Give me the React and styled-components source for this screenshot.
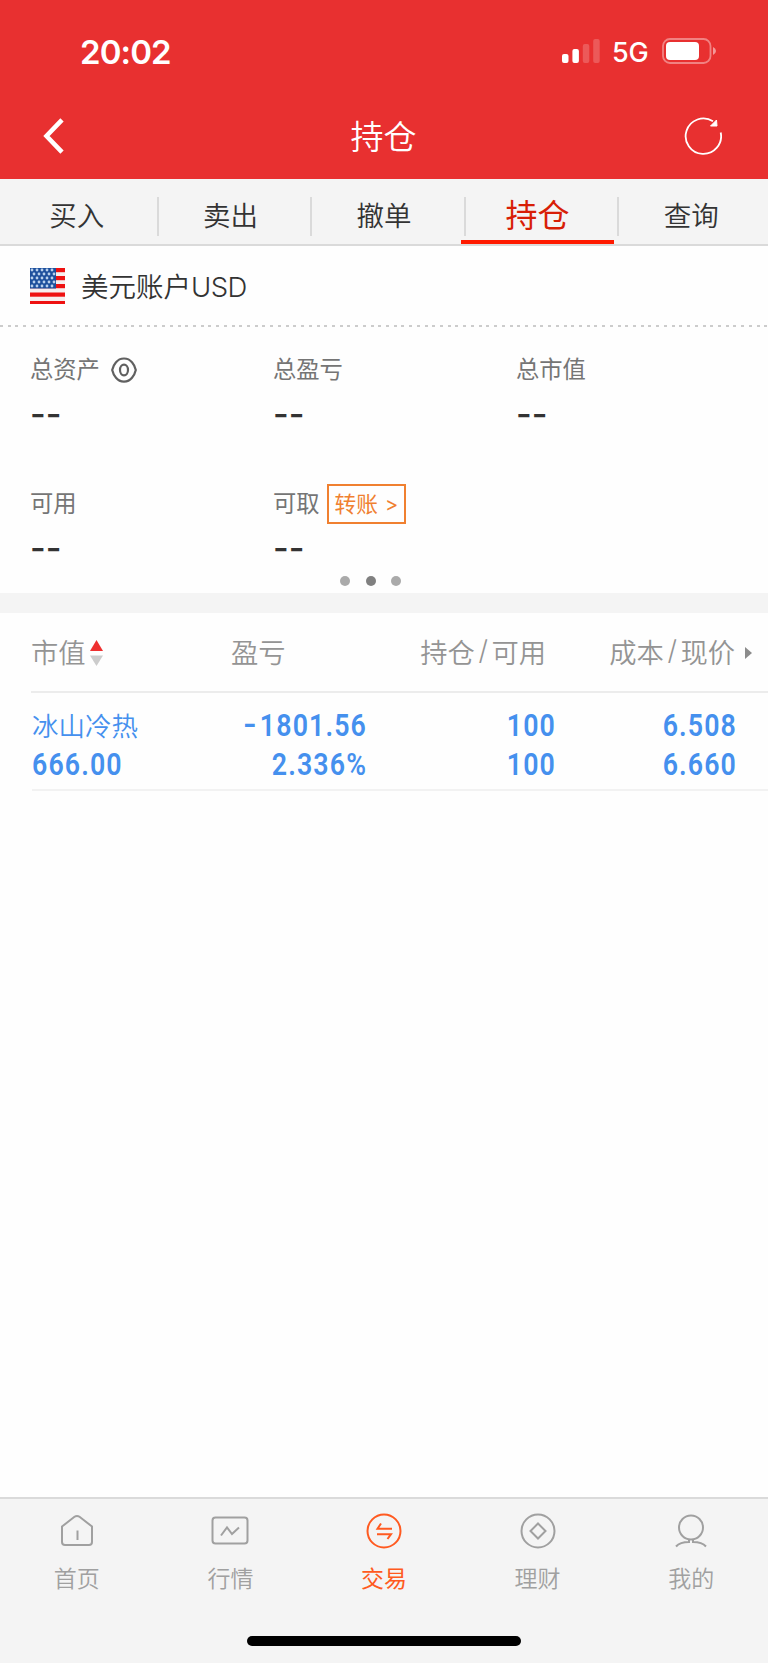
import React from 'react';
import styled, { createGlobalStyle } from 'styled-components';

const GlobalStyle = createGlobalStyle`
    * {
      box-sizing: border-box;
    }
    body {
      margin: 0;
      background: #ffffff;
      font-family: Inter, 'Noto Sans CJK SC', sans-serif;
    }
    svg {
      display: block;
      flex: none;
    }
`;

const StyledPage = styled.div`
    display: flex;
    flex-direction: column;
    width: 768px;
    height: 1663px;
    overflow: hidden;
    background: #fefefe;
`;

const StyledHeader = styled.header`
    height: 179px;
    flex: none;
    background: #e83030;
    color: #ffffff;
`;

const StyledStatusBar = styled.div`
    display: flex;
    align-items: center;
    justify-content: space-between;
    height: 102px;
    padding: 0 51px 0 80px;
`;

const StyledClock = styled.div`
    padding-top: 1px;
    font-size: 33px;
    font-weight: 600;
    line-height: 40px;
    letter-spacing: -0.9px;
`;

const StyledSignals = styled.div`
    display: flex;
    align-items: center;
`;

const StyledNetwork = styled.span`
    width: 40px;
    margin: 3px 10px 0 11px;
    font-size: 27px;
    font-weight: 500;
    line-height: 32px;
    letter-spacing: -0.2px;
`;

const StyledTitleBar = styled.div`
    display: grid;
    grid-template-columns: 1fr auto 1fr;
    align-items: center;
    height: 68px;
    padding: 0 46px 0 42px;
    svg:last-child {
      justify-self: end;
    }
`;

const StyledTitle = styled.h1`
    margin: 0;
    padding: 2px 0 0 3px;
    font-size: 33px;
    font-weight: 350;
    line-height: 48px;
`;

const StyledTabs = styled.nav`
    display: flex;
    flex: none;
    height: 67px;
    background: #f4f4f4;
    border-bottom: 2px solid #dadada;
`;

const StyledTab = styled.div`
    display: flex;
    flex: 1;
    align-items: center;
    justify-content: center;
    padding-top: ${({ $active }) => ($active ? '6px' : '8px')};
    font-size: ${({ $active }) => ($active ? '32px' : '27.5px')};
    font-weight: ${({ $active }) => ($active ? 400 : 350)};
    color: ${({ $active }) => ($active ? '#d81e06' : '#333333')};
    border-bottom: 4px solid ${({ $active }) => ($active ? '#ff1a00' : 'transparent')};
`;

const StyledTabCell = styled.div`
    display: flex;
    flex: 1;
    position: relative;
    & + &::before {
      content: '';
      position: absolute;
      left: 3px;
      top: 18px;
      width: 2px;
      height: 39px;
      background: #dadada;
    }
`;

const StyledAccount = styled.section`
    display: flex;
    flex: none;
    align-items: center;
    gap: 16px;
    height: 79px;
    padding-left: 30px;
    font-size: 27.5px;
    font-weight: 350;
    color: #333333;
    div {
      margin-top: -1px;
    }
`;

const StyledLatin = styled.span`
    font-weight: 300;
    letter-spacing: -0.6px;
`;

const StyledDots = styled.div`
    height: 2px;
    flex: none;
    background: repeating-linear-gradient(90deg, #cccccc 0 3px, transparent 3px 7.72px);
`;

const StyledSummary = styled.section`
    display: grid;
    flex: none;
    grid-template-columns: 243px 243px 1fr;
    grid-template-rows: 134px 98px;
    height: 244px;
    padding: 21px 0 0 30px;
`;

const StyledLabel = styled.div`
    display: flex;
    align-items: center;
    height: 44px;
    font-size: 23.3px;
    line-height: 40px;
    color: #757575;
    svg {
      margin-left: 11px;
    }
`;

const StyledDashes = styled.div`
    margin-top: 2px;
    font-size: 34px;
    font-weight: 500;
    line-height: 40px;
    color: #333333;
`;

const StyledTransfer = styled.button`
    display: flex;
    align-items: center;
    gap: 7px;
    width: 79px;
    height: 40px;
    margin-left: 7px;
    padding: 0 0 3px 6px;
    border: 2px solid #f08030;
    background: none;
    font-family: inherit;
    font-size: 21.7px;
    font-weight: 400;
    color: #f08030;
    span {
      font-size: 20px;
      padding-top: 3px;
    }
`;

const StyledPager = styled.div`
    display: flex;
    flex: none;
    gap: 15.5px;
    height: 22px;
    padding: 5px 0 0 340px;
`;

const StyledPagerDot = styled.span`
    width: 10px;
    height: 10px;
    border-radius: 50%;
    background: ${({ $active }) => ($active ? '#808080' : '#aaaaaa')};
`;

const StyledGap = styled.div`
    flex: none;
    height: 20px;
    background: #f4f4f4;
`;

const StyledTableHead = styled.div`
    display: flex;
    flex: none;
    align-items: center;
    height: 80px;
    margin-left: 31px;
    padding-bottom: 3px;
    border-bottom: 2px solid #ececec;
    font-size: 27.3px;
    font-weight: 350;
    color: #949494;
`;

const StyledHeadCell = styled.div`
    display: flex;
    align-items: center;
    justify-content: ${({ $end }) => ($end ? 'flex-end' : 'flex-start')};
    gap: ${({ $gap }) => $gap || 0}px;
    width: ${({ $width }) => $width}px;
    svg {
      margin-top: 4px;
    }
`;

const StyledSlash = styled.span`
    margin: 0 3.5px;
    font-weight: 300;
`;

const StyledMore = styled.span`
    margin-left: 10px;
`;

const StyledRow = styled.div`
    display: grid;
    flex: none;
    grid-template-columns: 160px 175px 189px 181px;
    grid-template-rows: 39px 39px;
    height: 98px;
    margin-left: 32px;
    padding-top: 13px;
    border-bottom: 2px solid #f2f2f2;
    color: #4590ee;
`;

const StyledStock = styled.div`
    font-size: 26.5px;
    font-weight: 350;
    line-height: 41px;
`;

const StyledFigure = styled.div`
    font-family: Roboto, sans-serif;
    font-size: 31.5px;
    font-weight: 600;
    line-height: 39px;
    letter-spacing: 1.3px;
    white-space: nowrap;
    text-align: ${({ $left }) => ($left ? 'left' : 'right')};
    transform: scaleX(0.85);
    transform-origin: ${({ $left }) => ($left ? 'left' : 'right')};
`;

const StyledMinus = styled.span`
    display: inline-block;
    margin-right: 2px;
    transform: translateY(-1px) scaleX(1.35);
    transform-origin: right;
`;

const StyledFooter = styled.footer`
    flex: none;
    height: 166px;
    margin-top: auto;
    background: #f4f4f4;
    border-top: 2px solid #dadada;
`;

const StyledFooterTabs = styled.div`
    display: flex;
    height: 137px;
`;

const StyledFooterTab = styled.div`
    display: flex;
    flex: 1;
    flex-direction: column;
    align-items: center;
    gap: 12px;
    padding-top: 13px;
    font-size: 23px;
    font-weight: ${({ $active }) => ($active ? 400 : 350)};
    line-height: 34px;
    color: ${({ $active }) => ($active ? '#ff5a20' : '#a0a0a0')};
`;

const StyledHomeBar = styled.div`
    width: 274px;
    height: 10px;
    margin: 0 auto;
    border-radius: 5px;
    background: #000000;
`;

const SignalIcon = () => (
    <svg width="39" height="26" viewBox="0 0 39 26" fill="#ffffff">
        <rect x="0" y="16" width="6.500" height="9" rx="2" />
        <rect x="10.400" y="11" width="6.500" height="14" rx="2" />
        <rect x="20.800" y="6" width="6.500" height="19" rx="2" opacity="0.2" />
        <rect x="31.200" y="1" width="6.500" height="24" rx="2" opacity="0.2" />
    </svg>
);

const BatteryIcon = () => (
    <svg width="55" height="26" viewBox="0 0 55 26">
        <rect x="1" y="1" width="47.5" height="24" rx="7" fill="none" stroke="#ffffff" strokeWidth="1.8" opacity="0.4" />
        <rect x="4" y="4" width="33" height="18" rx="4" fill="#ffffff" />
        <path d="M51 9 Q54 10.500 54 13 T51 17 Z" fill="#ffffff" opacity="0.5" />
    </svg>
);

const BackIcon = () => (
    <svg width="24" height="36" viewBox="0 0 24 36" fill="none" stroke="#ffffff" strokeWidth="4.6">
        <path d="M20 1.800 L4.500 18 L20 34.200" />
    </svg>
);

const RefreshIcon = () => (
    <svg width="38" height="38" viewBox="0 0 38 38">
        <path d="M29 4.300 A17.700 17.700 0 1 0 36.700 15.500" fill="none" stroke="#ffffff" strokeWidth="1.8" />
        <path d="M32.500 3 L33 9 H26.500 Z" fill="#ffffff" stroke="#ffffff" />
    </svg>
);

const FlagIcon = () => (
    <svg width="35" height="36" viewBox="0 0 35 36">
        <rect width="35" height="36" fill="#f7eeee" />
        {[0, 8, 16, 24.5, 33].map((y) => (
            <rect key={y} y={y} width="35" height={y > 30 ? 3 : 4.2} fill="#ee1111" />
        ))}
        <rect width="26" height="20.500" fill="#1d4f9c" />
        {[2, 6, 10, 14, 18].map((y, i) => [2.500, 7.500, 12.500, 17.500, 22.500].map((x) => (
            <circle key={`${x}-${y}`} cx={x + (i % 2 ? 1.500 : -0.500)} cy={y} r="1.400" fill="#b9d0ec" />
        )))}
    </svg>
);

const EyeIcon = () => (
    <svg width="26" height="26" viewBox="0 0 26 26" fill="none" stroke="#606060" strokeWidth="2.2">
        <path d="M1.200 13 Q2.200 8.500 5 5.300 C9 0.200 17 0.200 21 5.300 Q23.800 8.500 24.800 13 Q23.800 17.500 21 20.700 C17 25.800 9 25.800 5 20.700 Q2.200 17.500 1.200 13 Z" />
        <ellipse cx="13" cy="13" rx="4" ry="5.300" />
    </svg>
);

const SortIcon = () => (
    <svg width="13" height="26" viewBox="0 0 13 26">
        <path d="M6.500 0 L13 11 H0 Z" fill="#ee3030" />
        <path d="M0 15.500 H13 L6.500 26 Z" fill="#cccccc" />
    </svg>
);

const MoreIcon = () => (
    <svg width="7" height="12" viewBox="0 0 7 12">
        <path d="M0 0 L7 6 L0 12 Z" fill="#8c8c8c" />
    </svg>
);

const ICON_PATHS = {
    home: (
        <>
            <path d="M4 14.500 L16.500 4.800 Q19 3 21.500 4.800 L34 14.500 V30 Q34 33 31 33 H7 Q4 33 4 30 Z" />
            <path d="M19.500 18.500 V28" />
        </>
    ),
    market: (
        <>
            <rect x="1.500" y="5.500" width="35" height="26" rx="3" />
            <path d="M10 23.500 L16 15.500 L21 22 L28 15.500" />
        </>
    ),
    trade: (
        <>
            <circle cx="19" cy="19" r="16.500" />
            <path d="M16 11.500 L12.500 16.800 H27 M12 22.200 H26 L22.500 27" />
        </>
    ),
    wealth: (
        <>
            <circle cx="19" cy="19" r="16.500" />
            <path d="M19 11.500 L26.500 19 L19 26.500 L11.500 19 Z" />
        </>
    ),
    mine: (
        <>
            <circle cx="19" cy="15.500" r="12" />
            <path d="M4 34.500 Q8 30 17 30 V27.500 M21 27.500 V30 Q30 30 34 34.500" />
        </>
    ),
};

const FooterIcon = ({ name }) => (
    <svg width="38" height="38" viewBox="0 0 38 38" fill="none" stroke="currentColor" strokeWidth="2">
        {ICON_PATHS[name]}
    </svg>
);

const tabs = ['买入', '卖出', '撤单', '持仓', '查询'];

const summary = [
    { label: '总资产', icon: <EyeIcon /> },
    { label: '总盈亏' },
    { label: '总市值' },
    { label: '可用' },
    { label: '可取', icon: <StyledTransfer>转账<span>&gt;</span></StyledTransfer> },
];

const figures = [
    <><StyledMinus>-</StyledMinus>1801.56</>,
    '100',
    '6.508',
    '666.00',
    '2.336%',
    '100',
    '6.660',
];

const footerTabs = [
    { name: 'home', label: '首页' },
    { name: 'market', label: '行情' },
    { name: 'trade', label: '交易' },
    { name: 'wealth', label: '理财' },
    { name: 'mine', label: '我的' },
];

const App = () => (
    <>
        <GlobalStyle />
        <StyledPage>
            <StyledHeader>
                <StyledStatusBar>
                    <StyledClock>20:02</StyledClock>
                    <StyledSignals>
                        <SignalIcon />
                        <StyledNetwork>5G</StyledNetwork>
                        <BatteryIcon />
                    </StyledSignals>
                </StyledStatusBar>
                <StyledTitleBar>
                    <BackIcon />
                    <StyledTitle>持仓</StyledTitle>
                    <RefreshIcon />
                </StyledTitleBar>
            </StyledHeader>
            <StyledTabs>
                {tabs.map((label) => (
                    <StyledTabCell key={label}>
                        <StyledTab $active={label === '持仓'}>{label}</StyledTab>
                    </StyledTabCell>
                ))}
            </StyledTabs>
            <StyledAccount>
                <FlagIcon />
                <div>美元账户<StyledLatin>USD</StyledLatin></div>
            </StyledAccount>
            <StyledDots />
            <StyledSummary>
                {summary.map(({ label, icon }) => (
                    <div key={label}>
                        <StyledLabel>
                            {label}
                            {icon}
                        </StyledLabel>
                        <StyledDashes>--</StyledDashes>
                    </div>
                ))}
            </StyledSummary>
            <StyledPager>
                <StyledPagerDot />
                <StyledPagerDot $active />
                <StyledPagerDot />
            </StyledPager>
            <StyledGap />
            <StyledTableHead>
                <StyledHeadCell $width={200} $gap={4}>市值<SortIcon /></StyledHeadCell>
                <StyledHeadCell $width={114}>盈亏</StyledHeadCell>
                <StyledHeadCell $width={201} $end>持仓<StyledSlash>/</StyledSlash>可用</StyledHeadCell>
                <StyledHeadCell $width={206} $end>
                    成本<StyledSlash>/</StyledSlash>现价
                    <StyledMore><MoreIcon /></StyledMore>
                </StyledHeadCell>
            </StyledTableHead>
            <StyledRow>
                <StyledStock>冰山冷热</StyledStock>
                {figures.map((value, i) => (
                    // eslint-disable-next-line react/no-array-index-key
                    <StyledFigure key={i} $left={i === 3}>{value}</StyledFigure>
                ))}
            </StyledRow>
            <StyledFooter>
                <StyledFooterTabs>
                    {footerTabs.map(({ name, label }) => (
                        <StyledFooterTab key={name} $active={name === 'trade'}>
                            <FooterIcon name={name} />
                            {label}
                        </StyledFooterTab>
                    ))}
                </StyledFooterTabs>
                <StyledHomeBar />
            </StyledFooter>
        </StyledPage>
    </>
);

export default App;
